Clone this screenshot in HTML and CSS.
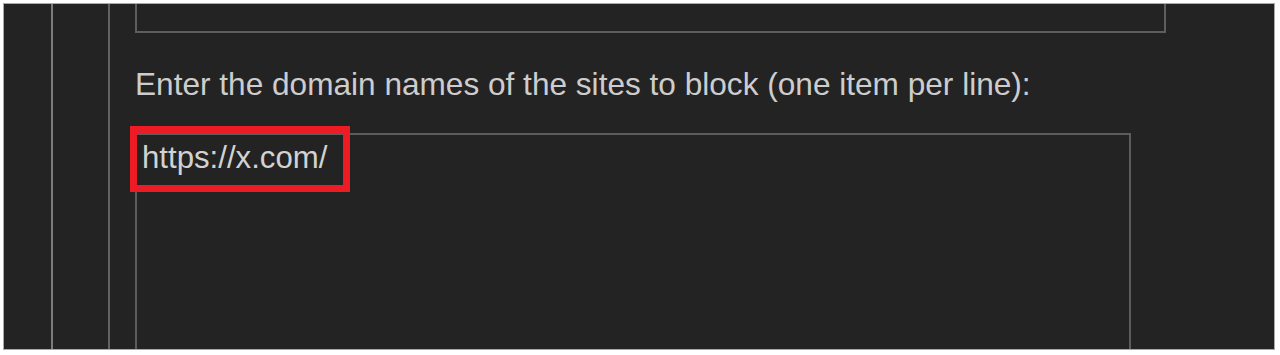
FILE: index.html
```html
<!DOCTYPE html>
<html lang="en">
<head>
<meta charset="utf-8">
<title>Block sites</title>
<link rel="stylesheet" href="styles.css">
</head>
<body>
<div class="frame">
  <div class="level1">
    <div class="level2">
      <div class="prev-box"></div>
      <label class="label" for="sites">Enter the domain names of the sites to block (one item per line):</label>
      <div class="field">
        <textarea id="sites" class="sites" spellcheck="false">https://x.com/</textarea>
        <div class="highlight"></div>
      </div>
    </div>
  </div>
</div>
</body>
</html>
```

FILE: styles.css
```css
html, body {
  margin: 0;
  padding: 0;
  background: #ffffff;
}

body {
  width: 1280px;
  height: 355px;
  overflow: hidden;
  font-family: "Liberation Sans", Arial, sans-serif;
}

.frame {
  box-sizing: border-box;
  margin: 3px 0 0 3px;
  width: 1272px;
  height: 347px;
  border: 1px solid #a9a9a9;
  background: #232323;
  overflow: hidden;
  display: flex;
  padding-left: 47px;
}

.level1 {
  flex: 1;
  display: flex;
  border-left: 2px solid #7c7c7c;
  padding-left: 55px;
}

.level2 {
  flex: 1;
  border-left: 2px solid #626262;
  padding-left: 25px;
}

.prev-box {
  box-sizing: border-box;
  width: 1031px;
  height: 29px;
  border: 2px solid #5e5e5e;
  border-top: none;
}

.label {
  display: block;
  margin-top: 33px;
  font-size: 31.6px;
  line-height: 36px;
  color: #cdcdcd;
  white-space: nowrap;
}

.field {
  position: relative;
  margin-top: 31px;
  width: 996px;
}

.sites {
  display: block;
  box-sizing: border-box;
  width: 996px;
  height: 320px;
  margin: 0;
  border: 2px solid #5c5c5c;
  padding: 5px 5px 4px;
  background: transparent;
  color: #d2d2d2;
  font-family: "Liberation Sans", Arial, sans-serif;
  font-size: 31.2px;
  line-height: 36px;
  resize: none;
  overflow: hidden;
  outline: none;
}

.highlight {
  position: absolute;
  left: -5px;
  top: -7px;
  width: 220px;
  height: 66px;
  box-sizing: border-box;
  border: 7px solid #ed1c24;
  pointer-events: none;
}
```
